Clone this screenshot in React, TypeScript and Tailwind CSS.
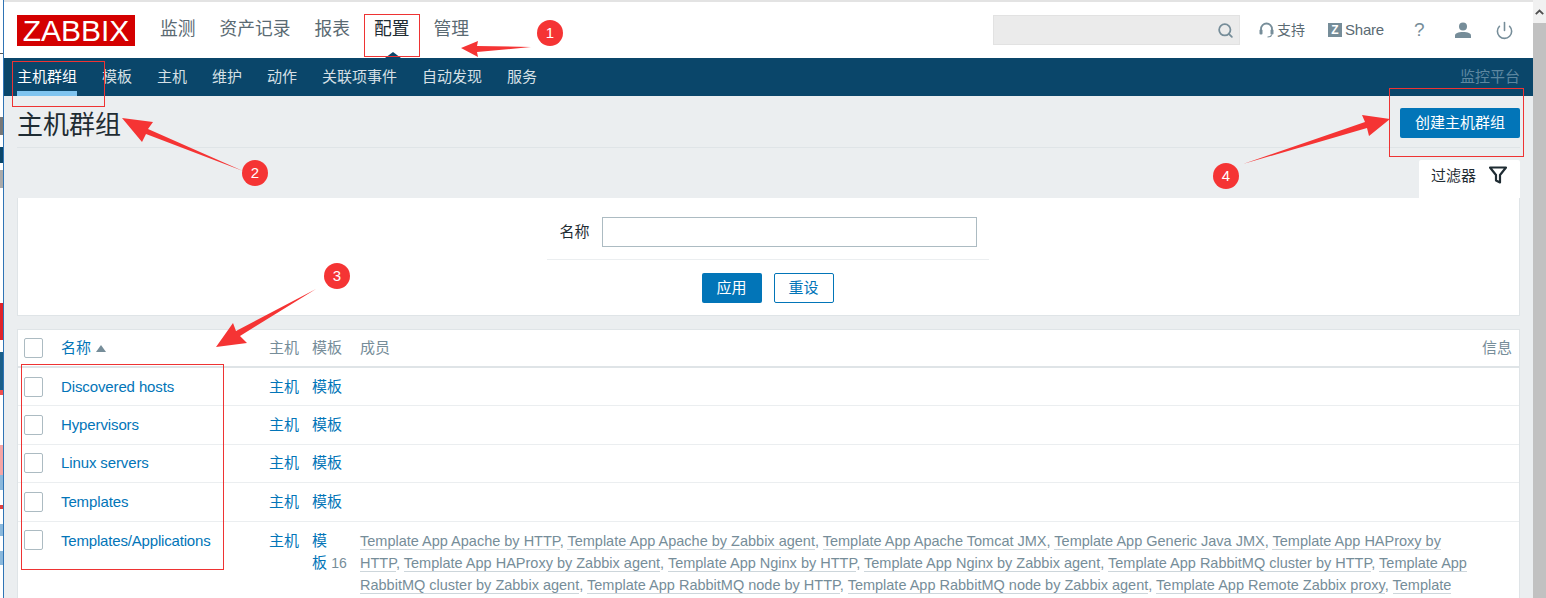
import React from 'react';
import { Search, Power } from 'lucide-react';

const FONT = "font-['Liberation_Sans','Noto_Sans_CJK_SC',sans-serif]";

const MAIN_NAV = ['监测', '资产记录', '报表', '配置', '管理'];
const SUB_NAV = ['主机群组', '模板', '主机', '维护', '动作', '关联项事件', '自动发现', '服务'];
const GROUPS = ['Discovered hosts', 'Hypervisors', 'Linux servers', 'Templates'];
const MEMBERS = [
  'Template App Apache by HTTP',
  'Template App Apache by Zabbix agent',
  'Template App Apache Tomcat JMX',
  'Template App Generic Java JMX',
  'Template App HAProxy by HTTP',
  'Template App HAProxy by Zabbix agent',
  'Template App Nginx by HTTP',
  'Template App Nginx by Zabbix agent',
  'Template App RabbitMQ cluster by HTTP',
  'Template App RabbitMQ cluster by Zabbix agent',
  'Template App RabbitMQ node by HTTP',
  'Template App RabbitMQ node by Zabbix agent',
  'Template App Remote Zabbix proxy',
  'Template App Zabbix Server',
];

function Checkbox() {
  return <div className="w-[19px] h-[20px] rounded-[2px] border border-[#acbbc2] bg-white" />;
}

function Badge({ n, className }: { n: number; className: string }) {
  return (
    <div className={`absolute w-[26px] h-[26px] rounded-full bg-[#f53434] text-white text-[15px] flex items-center justify-center ${className}`}>
      {n}
    </div>
  );
}

export default function App() {
  return (
    <div className={`relative flex w-[1546px] h-[598px] overflow-hidden bg-white ${FONT}`}>
      {/* window behind the page, only a sliver shows */}
      <div className="w-[3px] shrink-0 flex flex-col bg-white">
        <div className="h-[53px]" />
        <div className="h-px bg-[#555]" />
        <div className="h-[63px]" />
        <div className="h-[18px] bg-[#777]" />
        <div className="h-[12px]" />
        <div className="h-[16px] bg-[#0a466a]" />
        <div className="h-[7px]" />
        <div className="h-[18px] bg-[#aaa]" />
        <div className="h-[115px]" />
        <div className="h-[37px] bg-[#e0222a]" />
        <div className="h-[12px]" />
        <div className="h-[38px] bg-[#1a5f8a]" />
        <div className="h-[5px] bg-[#f05050]" />
        <div className="h-[50px]" />
        <div className="h-[30px] bg-[#f6a5a5]" />
        <div className="h-[15px] bg-[#8ab8dc]" />
        <div className="h-[15px]" />
        <div className="h-[4px] bg-[#e04040]" />
        <div className="h-[15px]" />
        <div className="h-[12px] bg-[#8ab8dc]" />
        <div className="h-[15px]" />
        <div className="h-[14px] bg-[#8ab8dc]" />
      </div>
      <div className="w-px shrink-0 bg-[#2f74b5]" />

      <div className="w-[1529px] shrink-0 flex flex-col bg-[#ebeef0]">
        {/* top nav */}
        <div className="h-[2px] shrink-0 bg-[#e3e3e3]" />
        <header className="h-[56px] bg-white flex items-start pl-[13px] pr-[13px] shrink-0">
          <div className="mt-[13px] w-[118px] h-[31px] bg-[#d40000] text-white text-[30px] leading-[31px] text-center">ZABBIX</div>
          <nav className="ml-[25px] mt-[12px] flex gap-[24px] text-[17.75px] leading-[30px]">
            {MAIN_NAV.map((item) => (
              <span key={item} className={item === '配置' ? 'text-[#1f2c33]' : 'text-[#5a6a73]'}>{item}</span>
            ))}
          </nav>
          <div className="ml-auto mr-[6px] mt-[13px] flex items-center h-[30px]">
            <div className="w-[247px] h-[30px] bg-[#ebebeb] border border-[#e2e2e2] flex items-center justify-end pr-[5px]">
              <Search className="w-[17px] h-[17px] text-[#768d99]" strokeWidth={2.5} />
            </div>
            <svg className="ml-[19px] w-[15px] h-[16px] text-[#768d99]" viewBox="0 0 15 16" fill="none" stroke="currentColor">
              <path d="M2 10V7a5.5 5.5 0 0 1 11 0v3" strokeWidth="1.8" />
              <rect x="0.5" y="7.5" width="3" height="5" rx="1" fill="currentColor" strokeWidth="0" />
              <rect x="11.5" y="7.5" width="3" height="5" rx="1" fill="currentColor" strokeWidth="0" />
              <path d="M12.5 12.5c0 1.5-2 2.500-4 2.500" strokeWidth="1.2" />
            </svg>
            <span className="ml-[3px] text-[14px] text-[#5a6a73]">支持</span>
            <div className="ml-[23px] w-[14px] h-[14px] bg-[#768d99] text-white text-[12px] leading-[14px] font-bold text-center">Z</div>
            <span className="ml-[3px] text-[15px] tracking-[-0.2px] text-[#5a6a73]">Share</span>
            <span className="ml-[30px] w-[10px] text-[19px] text-[#768d99] text-center">?</span>
            <svg className="ml-[31px] w-[16px] h-[16px] text-[#768d99]" viewBox="0 0 16 16" fill="currentColor">
              <circle cx="8" cy="4.6" r="4" />
              <path d="M0 16v-2.5c0-2 3-3.5 8-3.5s8 1.500 8 3.500V16z" />
            </svg>
            <Power className="ml-[24px] w-[19px] h-[19px] text-[#768d99]" strokeWidth={2} />
          </div>
        </header>

        {/* sub nav */}
        <div className="relative h-[38px] bg-[#0a466a] flex items-start px-[13px] shrink-0">
          <div className="absolute left-[381px] -top-[6px] w-0 h-0 border-x-[8px] border-x-transparent border-b-[6px] border-b-[#0a466a]" />
          <nav className="flex gap-[25px] text-[15px] leading-[38px]">
            {SUB_NAV.map((item, i) => (
              <span key={item} className={i === 0 ? 'h-[38px] text-white border-b-[5px] border-[#7fc4f0]' : 'text-[#d6e0e6]'}>{item}</span>
            ))}
          </nav>
          <span className="ml-auto text-[15px] leading-[38px] text-[#5d87a0]">监控平台</span>
        </div>

        <main className="flex flex-col px-[13px] shrink-0">
          {/* title */}
          <div className="h-[52px] flex items-start justify-between border-b border-[#dfe4e7]">
            <h1 className="mt-[11px] text-[26px] leading-[36px] font-normal text-[#1f2c33]">主机群组</h1>
            <button className="mt-[12px] w-[120px] h-[30px] rounded-[2px] bg-[#0275b8] text-white text-[15px]">创建主机群组</button>
          </div>

          {/* filter tab */}
          <div className="mt-[12px] flex justify-end">
            <div className="w-[101px] h-[38px] bg-white rounded-t-[2px] flex items-start pt-[6px] pl-[12px]">
              <span className="text-[15px] leading-[20px] text-[#1f2c33]">过滤器</span>
              <svg className="ml-[13px] w-[18px] h-[18px]" viewBox="0 0 18 18" fill="none" stroke="#1f2c33" strokeWidth="2.2">
                <path d="M1 1.500h16L11 9v7.500l-4-2V9z" strokeLinejoin="round" />
              </svg>
            </div>
          </div>

          {/* filter form */}
          <div className="h-[118px] bg-white border-b border-x border-[#dfe4e7] flex flex-col items-center">
            <div className="mr-[2px] w-[442px] h-[62px] pt-[19px] border-b border-[#ebeef0] flex items-start">
              <span className="ml-[13px] w-[42px] text-[15px] leading-[30px] text-[#1f2c33]">名称</span>
              <input className="w-[375px] h-[30px] bg-white border border-[#acbbc2] outline-none" />
            </div>
            <div className="mr-[2px] mt-[13px] flex gap-[12px]">
              <button className="w-[60px] h-[30px] rounded-[2px] bg-[#0275b8] text-white text-[15px]">应用</button>
              <button className="w-[60px] h-[30px] rounded-[2px] bg-white border border-[#0275b8] text-[#0275b8] text-[15px]">重设</button>
            </div>
          </div>

          {/* host groups table */}
          <div className="mt-[13px] bg-white border-x border-t border-[#dfe4e7]">
            <table className="w-full table-fixed border-collapse text-[15px] leading-[22px]">
              <colgroup>
                <col className="w-[36px]" />
                <col className="w-[208px]" />
                <col className="w-[43px]" />
                <col className="w-[48px]" />
                <col />
                <col className="w-[50px]" />
              </colgroup>
              <thead>
                <tr className="h-[37px] border-b-2 border-[#dfe4e7] text-[#768d99] font-normal">
                  <th className="pl-[6px] align-middle font-normal"><Checkbox /></th>
                  <th className="pl-[7px] text-left font-normal text-[#0275b8]">
                    名称<span className="inline-block ml-[5px] mb-[1px] w-0 h-0 border-x-[5px] border-x-transparent border-b-[7px] border-b-[#768d99]" />
                  </th>
                  <th className="pl-[7px] text-left font-normal">主机</th>
                  <th className="pl-[7px] text-left font-normal">模板</th>
                  <th className="pl-[7px] text-left font-normal">成员</th>
                  <th className="pr-[7px] text-right font-normal">信息</th>
                </tr>
              </thead>
              <tbody>
                {GROUPS.map((name) => (
                  <tr key={name} className="h-[38.5px] border-b border-[#ebeef0]">
                    <td className="pl-[6px]"><Checkbox /></td>
                    <td className="pl-[7px] text-[#0275b8] tracking-[-0.12px]">{name}</td>
                    <td className="pl-[7px] text-[#0275b8]">主机</td>
                    <td className="pl-[7px] text-[#0275b8]">模板</td>
                    <td />
                    <td />
                  </tr>
                ))}
                <tr>
                  <td className="pl-[6px] pt-[8px] align-top"><Checkbox /></td>
                  <td className="pl-[7px] pt-[8px] align-top text-[#0275b8] tracking-[-0.18px]">Templates/Applications</td>
                  <td className="pl-[7px] pt-[8px] align-top text-[#0275b8]">主机</td>
                  <td className="pl-[7px] pt-[8px] align-top text-[#0275b8]">
                    模板&nbsp;<span className="text-[14px] text-[#768d99]">16</span>
                  </td>
                  <td colSpan={2} className="pl-[7px] pr-[50px] pt-[8px] align-top text-[14.5px] text-[#768d99]">
                    {MEMBERS.map((m, i) => (
                      <React.Fragment key={m}>
                        <span className="border-b border-[#cdd6db]">{m}</span>
                        {i < MEMBERS.length - 1 ? ', ' : ''}
                      </React.Fragment>
                    ))}
                  </td>
                </tr>
              </tbody>
            </table>
          </div>
        </main>
      </div>

      {/* scrollbar */}
      <div className="w-[13px] shrink-0 flex flex-col bg-[#f1f1f1]">
        <div className="h-[23px] flex items-center justify-center">
          <svg className="w-[9px] h-[6px]" viewBox="0 0 9 6" fill="none" stroke="#505050" strokeWidth="1.800">
            <path d="M0.800 5.200 4.500 1.500l3.700 3.700" />
          </svg>
        </div>
        <div className="flex-1 bg-[#c1c1c1]" />
      </div>

      {/* screenshot annotations */}
      <div className="absolute left-[364px] top-[14px] w-[56px] h-[43px] border border-[#ee3333]" />
      <div className="absolute left-[12px] top-[61px] w-[93px] h-[46px] border border-[#ee3333]" />
      <div className="absolute left-[1389px] top-[88px] w-[135px] h-[69px] border border-[#ee3333]" />
      <div className="absolute left-[21px] top-[364px] w-[203px] h-[206px] border border-[#ee3333]" />
      <svg className="absolute left-0 top-0 w-[1546px] h-[598px] pointer-events-none" viewBox="0 0 1546 598" fill="#f53434">
        <polygon points="461,48 478,41 477,46 531,47 477,52 478,57" />
        <polygon points="122,118 153,122 148,129 243,171 146,134 142,142" />
        <polygon points="216,347 233,323 236,331 316,289 240,336 247,343" />
        <polygon points="1390,119 1369,136 1367,128 1243,164 1365,122 1362,115" />
      </svg>
      <Badge n={1} className="left-[537px] top-[20px]" />
      <Badge n={2} className="left-[242px] top-[160px]" />
      <Badge n={3} className="left-[324px] top-[263px]" />
      <Badge n={4} className="left-[1213px] top-[163px]" />
    </div>
  );
}
